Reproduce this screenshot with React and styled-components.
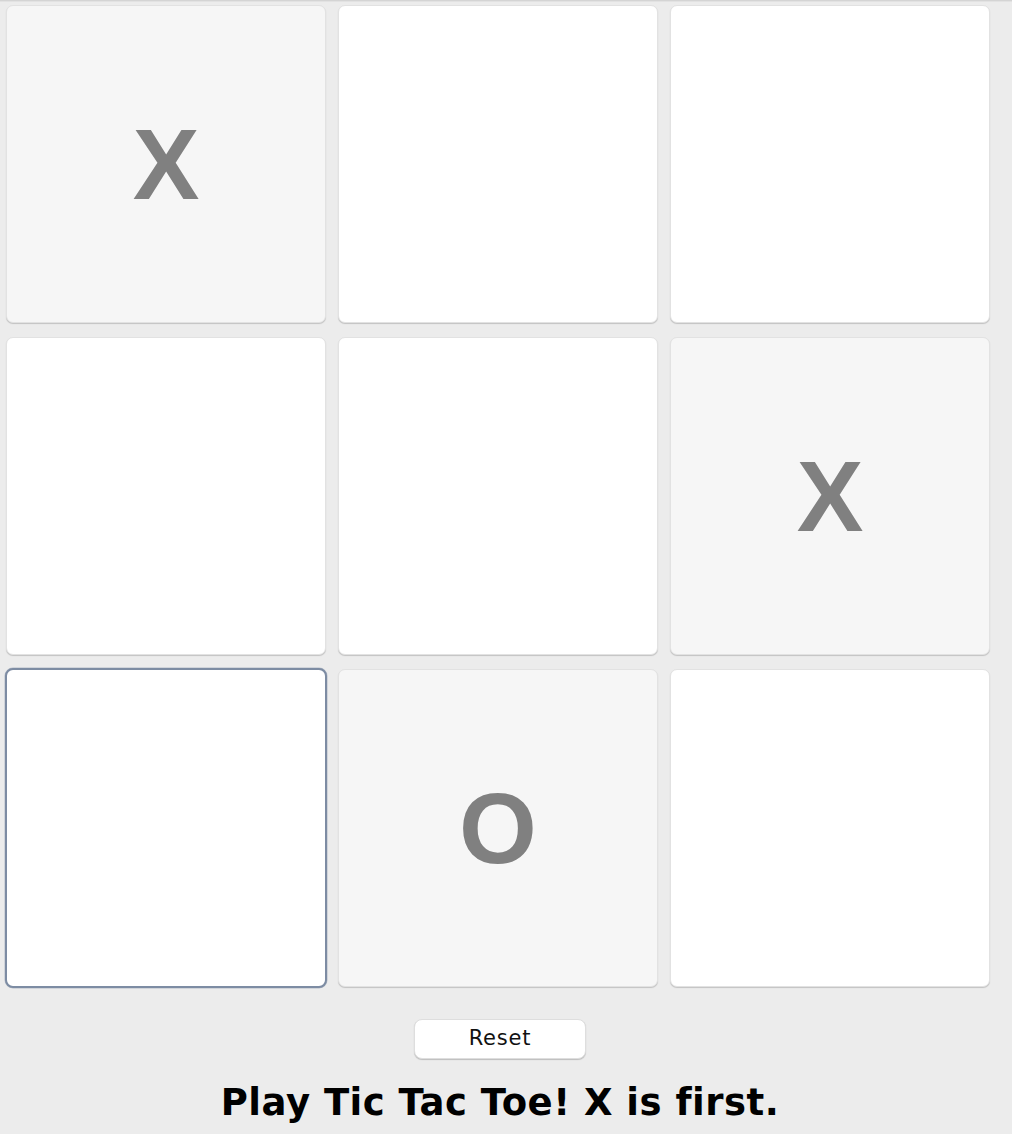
import React, { useState } from 'react';
import styled, { createGlobalStyle } from 'styled-components';

const GlobalStyle = createGlobalStyle`
  html, body {
    margin: 0;
    padding: 0;
    background: #ececec;
  }
  body {
    font-family: "DejaVu Sans", "Liberation Sans", sans-serif;
  }
`;

const Window = styled.div`
  width: 1012px;
  height: 1134px;
  box-sizing: border-box;
  background: #ececec;
  border-top: 1px solid #d4d4d4;
  box-shadow: inset 0 1px 0 #e2e2e2;
`;

const Content = styled.div`
  width: 1000px;
  display: flex;
  flex-direction: column;
  align-items: center;
`;

const Board = styled.div`
  align-self: stretch;
  display: grid;
  grid-template-columns: repeat(3, 320px);
  grid-auto-rows: 318px;
  column-gap: 12px;
  row-gap: 14px;
  padding: 4px 0 0 6px;
`;

const Cell = styled.button`
  box-sizing: border-box;
  margin: ${p => (p.$focused ? '-1px' : '0')};
  padding: 0;
  display: flex;
  align-items: center;
  justify-content: center;
  border-radius: ${p => (p.$focused ? '8px' : '7px')};
  background: ${p => (p.$taken ? '#f6f6f6' : '#ffffff')};
  border: ${p => (p.$focused ? '2px solid #7d8ca3' : '1px solid #e2e2e2')};
  box-shadow: ${p =>
    p.$focused ? '0 0 0 0.5px rgba(125, 140, 163, 0.5)' : '0 1px 1px rgba(0, 0, 0, 0.18)'};
  color: #808080;
  font-family: "Liberation Sans", Arial, sans-serif;
  font-weight: bold;
  font-size: 100px;
  line-height: 1;
  cursor: pointer;
`;

const Controls = styled.div`
  display: flex;
  flex-direction: column;
  align-items: center;
  padding-top: 32px;
`;

const ResetButton = styled.button`
  width: 172px;
  height: 40px;
  box-sizing: border-box;
  background: #ffffff;
  border: 1px solid #dedede;
  border-radius: 8px;
  box-shadow: 0 1px 1px rgba(0, 0, 0, 0.2);
  font-family: "DejaVu Sans", sans-serif;
  font-size: 21px;
  letter-spacing: 0.8px;
  color: #111;
  padding: 0 0 2px;
  cursor: pointer;
`;

const Status = styled.div`
  margin-top: 22px;
  font-family: "DejaVu Sans", sans-serif;
  font-weight: bold;
  font-size: 37px;
  letter-spacing: 0.5px;
  color: #000;
  line-height: 1.2;
`;

const initial = ['X', '', '', '', '', 'X', '', 'O', ''];

const App = () => {
  const [cells, setCells] = useState(initial);
  const focused = 6;

  return (
    <>
      <GlobalStyle />
      <Window>
        <Content>
          <Board>
            {cells.map((v, i) => (
              <Cell key={i} $taken={v !== ''} $focused={i === focused}>
                {v}
              </Cell>
            ))}
          </Board>
          <Controls>
            <ResetButton onClick={() => setCells(Array(9).fill(''))}>Reset</ResetButton>
            <Status>Play Tic Tac Toe! X is first.</Status>
          </Controls>
        </Content>
      </Window>
    </>
  );
};

export default App;
